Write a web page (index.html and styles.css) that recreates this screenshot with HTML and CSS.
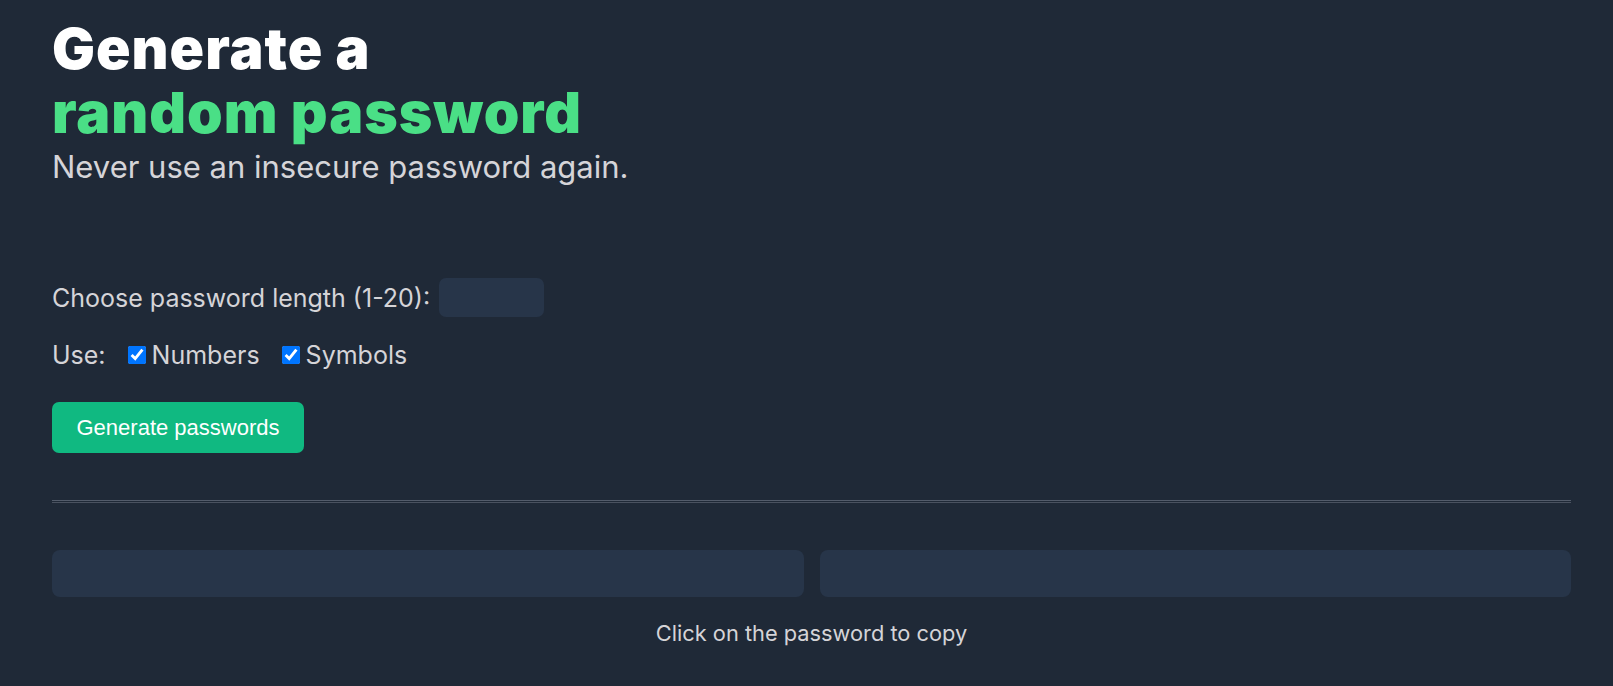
FILE: index.html
```html
<!DOCTYPE html>
<html lang="en">
<head>
<meta charset="utf-8">
<title>Password generator</title>
<link rel="stylesheet" href="styles.css">
</head>
<body>
<main class="page">
  <header class="hero">
    <h1 class="title">Generate a<br><span class="accent">random password</span></h1>
    <p class="subtitle">Never use an insecure password again.</p>
  </header>

  <section class="options">
    <div class="row row-length">
      <label class="label" for="length">Choose password length (1-20):</label>
      <input class="length-input" id="length" type="text">
    </div>
    <div class="row row-use">
      <span class="label">Use:</span>
      <label class="check"><input type="checkbox" checked><span>Numbers</span></label>
      <label class="check"><input type="checkbox" checked><span>Symbols</span></label>
    </div>
    <button class="generate" type="button">Generate passwords</button>
  </section>

  <div class="divider"></div>

  <section class="results">
    <div class="password-box"></div>
    <div class="password-box"></div>
  </section>

  <p class="hint">Click on the password to copy</p>
</main>
</body>
</html>
```

FILE: styles.css
```css
* {
  box-sizing: border-box;
}

html, body {
  margin: 0;
  padding: 0;
  background: #1f2937;
}

body {
  font-family: "Inter", "Noto Sans", sans-serif;
  color: #d5d4d8;
  min-height: 686px;
}

.page {
  display: flex;
  flex-direction: column;
  padding: 17px 42px 0 52px;
}

.hero {
  display: flex;
  flex-direction: column;
}

.title {
  margin: 0;
  font-family: "Inter", sans-serif;
  font-weight: 900;
  font-size: 57px;
  line-height: 64px;
  letter-spacing: 1px;
  color: #ffffff;
}

.accent {
  color: #4adf86;
}

.subtitle {
  margin: 3px 0 0;
  font-size: 31px;
  line-height: 38px;
  color: #d5d4d8;
}

.options {
  display: flex;
  flex-direction: column;
  align-items: flex-start;
  margin-top: 92px;
}

.row {
  display: flex;
  align-items: center;
}

.label {
  font-size: 25px;
  line-height: 30px;
}

.row-length {
  gap: 9px;
}

.length-input {
  width: 105px;
  height: 39px;
  border: none;
  border-radius: 7px;
  background: #273549;
  color: #d5d4d8;
  font-family: inherit;
  font-size: 22px;
  padding: 0 10px;
  outline: none;
}

.row-use {
  margin-top: 23px;
  gap: 22px;
}

.check {
  display: flex;
  align-items: center;
  gap: 6px;
  font-size: 25px;
  line-height: 30px;
}

.check input {
  width: 18px;
  height: 18px;
  margin: 0;
  accent-color: #0075ff;
}

.generate {
  margin-top: 32px;
  width: 252px;
  height: 51px;
  border: none;
  border-radius: 7px;
  background: #10b981;
  color: #ffffff;
  font-family: "Liberation Sans", Arial, sans-serif;
  font-size: 22px;
  cursor: pointer;
}

.divider {
  margin-top: 47px;
  height: 3px;
  border-top: 1px solid #535c6b;
  border-bottom: 1px solid #4a5260;
}

.results {
  margin-top: 47px;
  display: grid;
  grid-template-columns: 1fr 1fr;
  gap: 16px;
}

.password-box {
  height: 47px;
  border-radius: 8px;
  background: #273549;
}

.hint {
  margin: 23px 0 0;
  text-align: center;
  font-size: 21.8px;
  line-height: 27px;
  color: #d5d4d8;
}
```
